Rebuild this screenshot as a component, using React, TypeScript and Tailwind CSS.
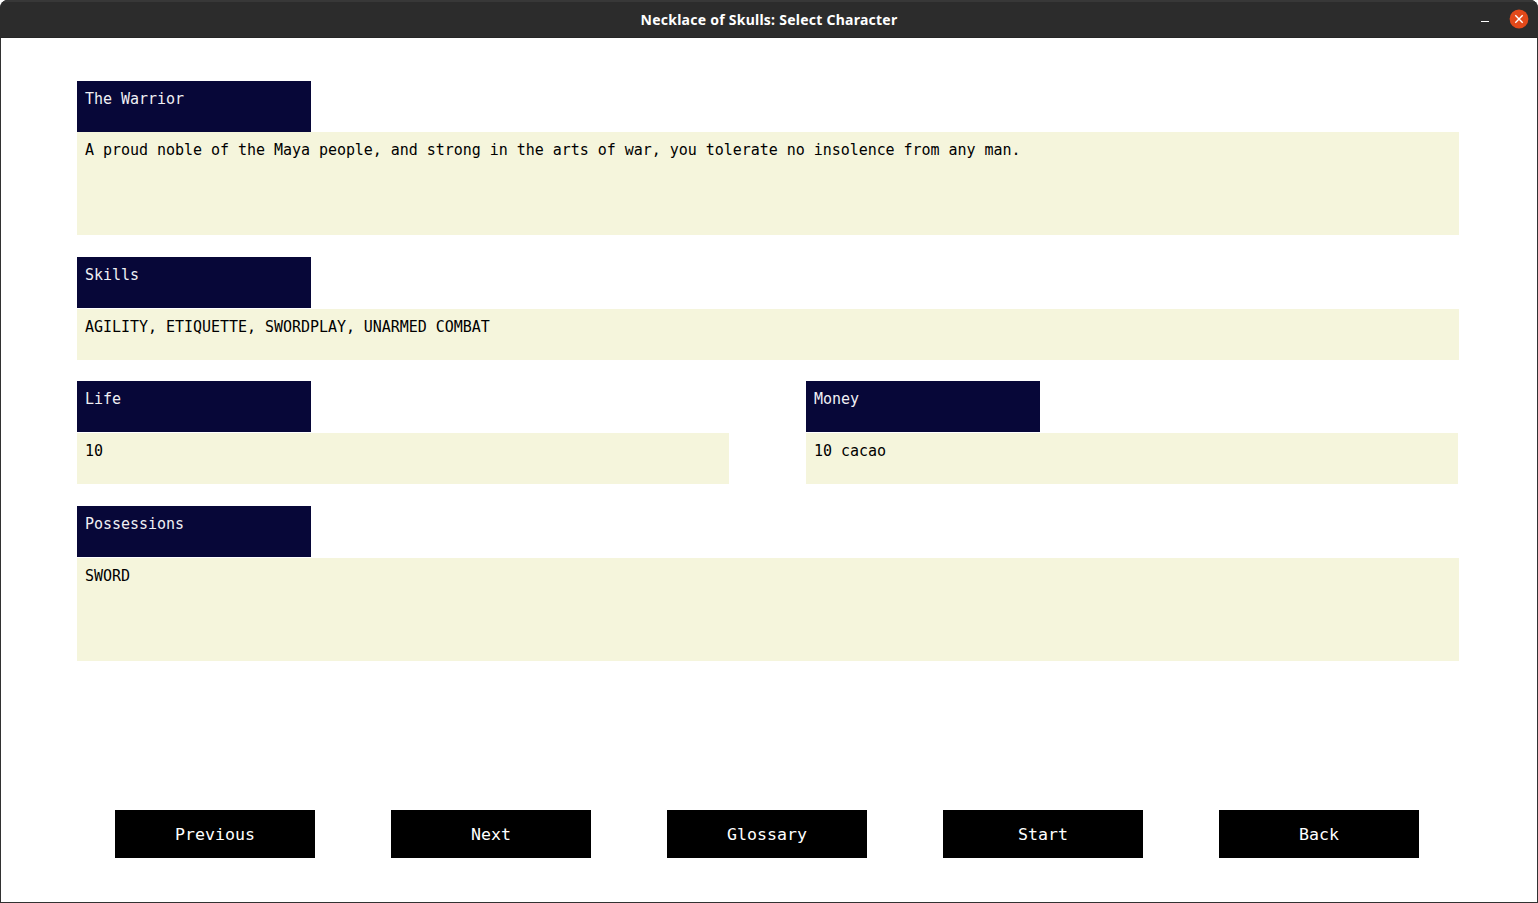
import React from "react";

type FieldProps = {
  label: string;
  value: string;
  className?: string;
  bodyClass?: string;
};

function Field({ label, value, className = "", bodyClass = "mt-px h-[51px]" }: FieldProps) {
  return (
    <section className={`font-['DejaVu_Sans_Mono',monospace] text-[15px] leading-[18px] tracking-[-0.035px] ${className}`}>
      <h2 className="h-[51px] w-[234px] bg-[#070738] px-2 pt-[9px] text-[#f0f0f4]">{label}</h2>
      <p className={`bg-[#f5f5dc] px-2 pt-[9px] text-black ${bodyClass}`}>{value}</p>
    </section>
  );
}

const actions = ["Previous", "Next", "Glossary", "Start", "Back"];

export default function App() {
  return (
    <div className="h-[903px] w-[1538px] bg-white">
      <div className="flex h-full flex-col overflow-hidden rounded-t-[8px] bg-[#323232]">
        <header className="flex h-[38px] shrink-0 items-center border-t-2 border-b border-t-[#383838] border-b-[#262626] bg-[#2c2c2c]">
          <div className="w-[100px]" />
          <h1 className="flex-1 text-center font-['Noto_Sans',sans-serif] text-[14px] leading-5 font-bold tracking-[0.25px] whitespace-nowrap text-white">
            Necklace of Skulls: Select Character
          </h1>
          <div className="flex w-[100px] items-center justify-end gap-5 pr-[9px] pb-[2px]">
            <button aria-label="Minimize" className="flex h-5 w-2 items-center pt-[5px]">
              <span className="h-px w-2 bg-white" />
            </button>
            <button aria-label="Close" className="h-5 w-5">
              <svg viewBox="0 0 20 20" className="h-5 w-5">
                <circle cx="10" cy="10" r="9.4" fill="#e2491a" />
                <path d="M6.3 6.3l7.4 7.4M13.7 6.3l-7.4 7.4" stroke="#fff" strokeWidth="1.4" />
              </svg>
            </button>
          </div>
        </header>
        <main className="mx-px mb-px flex flex-1 flex-col bg-white px-[76px] pt-[43px]">
          <Field
            label="The Warrior"
            value="A proud noble of the Maya people, and strong in the arts of war, you tolerate no insolence from any man."
            className="w-[1382px]"
            bodyClass="h-[103px]"
          />
          <Field
            label="Skills"
            value="AGILITY, ETIQUETTE, SWORDPLAY, UNARMED COMBAT"
            className="mt-[22px] w-[1382px]"
          />
          <div className="mt-[21px] flex gap-[77px]">
            <Field label="Life" value="10" className="w-[652px]" />
            <Field label="Money" value="10 cacao" className="w-[652px]" />
          </div>
          <Field
            label="Possessions"
            value="SWORD"
            className="mt-[22px] w-[1382px]"
            bodyClass="mt-px h-[103px]"
          />
          <nav className="mt-auto mb-[44px] flex gap-[76px] pl-[38px]">
            {actions.map((action) => (
              <button
                key={action}
                className="h-12 w-[200px] bg-black pt-px font-['DejaVu_Sans_Mono',monospace] text-[16.6px] leading-5 text-white"
              >
                {action}
              </button>
            ))}
          </nav>
        </main>
      </div>
    </div>
  );
}
